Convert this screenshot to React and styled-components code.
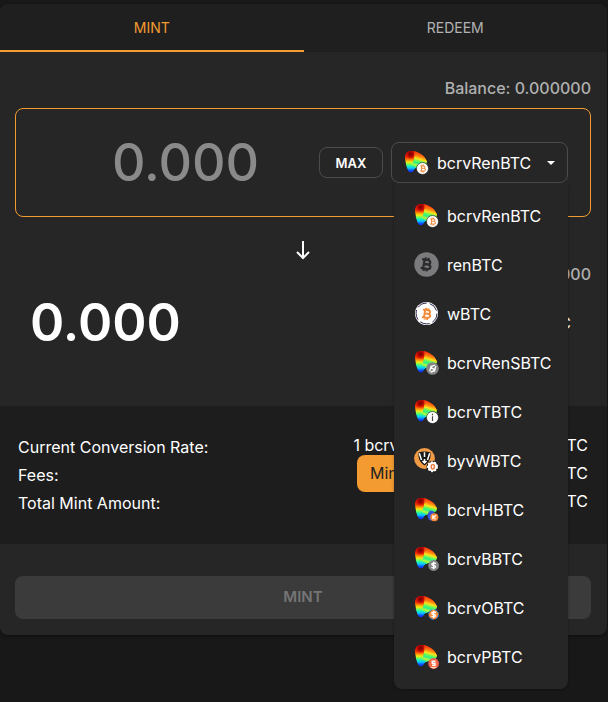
import React, { useId, useState } from "react";
import styled, { createGlobalStyle } from "styled-components";

const GlobalStyle = createGlobalStyle`
  * {
    box-sizing: border-box;
  }
  body {
    margin: 0;
    background: #181818;
    color: #fff;
    font-family: Inter, "Liberation Sans", sans-serif;
    font-size: 16px;
    line-height: 24px;
  }
  button, input, select {
    font: inherit;
    color: inherit;
  }
`;

const Page = styled.main`
  min-height: 100vh;
  padding: 4px 1px 16px 0;
`;

const Card = styled.section`
  background: #262626;
  border-radius: 8px;
  box-shadow: 0 1px 3px rgba(0, 0, 0, 0.4);
`;

const Tabs = styled.div`
  display: grid;
  grid-template-columns: 1fr 1fr;
  background: #1f1f1f;
  border-radius: 8px 8px 0 0;
`;

const Tab = styled.button`
  height: 48px;
  padding: 2px 0 0;
  border: 0;
  border-bottom: 2px solid ${(p) => (p.$active ? "#f39b31" : "transparent")};
  background: none;
  color: ${(p) => (p.$active ? "#f39b31" : "#b3b3b3")};
  font-size: 14px;
  cursor: pointer;
`;

const Exchange = styled.div`
  padding: 24px 16px 54px 15px;
`;

const Balance = styled.div`
  color: #b0b0b0;
  font-weight: 500;
  text-align: right;
`;

const InputBox = styled.div`
  display: flex;
  align-items: center;
  gap: 8px;
  margin-top: 8px;
  padding: 33px 22px 33px 44px;
  border: 1px solid #f39b31;
  border-radius: 8px;
`;

const AmountInput = styled.input`
  flex: 1;
  min-width: 0;
  height: 41px;
  padding: 0;
  border: 0;
  outline: 0;
  background: none;
  font-size: 52px;
  font-weight: 500;
  text-align: center;

  &::placeholder {
    color: #8a8a8a;
    opacity: 1;
  }
`;

const MaxButton = styled.button`
  width: 64px;
  height: 31px;
  padding: 0;
  border: 1px solid #4c4c4c;
  border-radius: 8px;
  background: none;
  font-size: 13px;
  font-weight: 600;
  cursor: pointer;
`;

const TokenSelect = styled.div`
  position: relative;
  width: 177px;
`;

const TokenField = styled.div`
  display: flex;
  align-items: center;
  gap: 8px;
  height: 41px;
  padding: 0 10px 0 12px;
  border: 1px solid #4c4c4c;
  border-radius: 8px;
`;

const NativeSelect = styled.select`
  flex: 1;
  min-width: 0;
  height: 39px;
  padding: 0;
  border: 0;
  outline: 0;
  appearance: none;
  background: none;
  cursor: pointer;
`;

const Menu = styled.ul`
  position: absolute;
  z-index: 2;
  top: 100%;
  right: 0;
  left: 3px;
  margin: 0;
  padding: 8px 0;
  border-radius: 0 0 8px 8px;
  background: #262626;
  box-shadow: 0 1px 3px rgba(0, 0, 0, 0.3);
  list-style: none;
`;

const MenuItem = styled.button`
  display: flex;
  align-items: center;
  gap: 8px;
  width: 100%;
  height: 49px;
  padding: 0 0 0 20px;
  border: 0;
  background: none;
  text-align: left;
  cursor: pointer;
`;

const Direction = styled.div`
  display: flex;
  justify-content: center;
  padding-top: 21px;
`;

const OutputRow = styled.div`
  display: flex;
  align-items: center;
  justify-content: space-between;
  height: 58px;
  margin-top: 8px;
  padding: 0 20px 0 15px;
`;

const OutputAmount = styled.output`
  font-size: 52px;
  font-weight: 600;
`;

const Details = styled.dl`
  margin: 0;
  padding: 27px 19px 27px 18px;
  background: #1d1d1d;
`;

const DetailRow = styled.div`
  position: relative;
  display: flex;
  justify-content: space-between;
  height: 28px;

  dt {
    line-height: 28px;
  }
  dd {
    margin: 0;
    line-height: 24px;
  }
`;

const Tooltip = styled.span`
  position: absolute;
  z-index: 1;
  top: -6px;
  right: 70px;
  width: 161px;
  padding: 6px 13px 7px;
  border-radius: 8px;
  background: #f39b31;
  color: #222;
`;

const Actions = styled.div`
  padding: 32px 16px 16px 15px;
`;

const SubmitButton = styled.button`
  width: 100%;
  height: 43px;
  padding: 0 0 2px;
  border: 0;
  border-radius: 8px;
  background: #3b3b3b;
  color: #757575;
  font-size: 15px;
  font-weight: 600;
`;

const tokens = [
  { symbol: "bcrvRenBTC", icon: "curve", badge: "ren" },
  { symbol: "renBTC", icon: "ren" },
  { symbol: "wBTC", icon: "wbtc" },
  { symbol: "bcrvRenSBTC", icon: "curve", badge: "sbtc" },
  { symbol: "bcrvTBTC", icon: "curve", badge: "tbtc" },
  { symbol: "byvWBTC", icon: "yearn" },
  { symbol: "bcrvHBTC", icon: "curve", badge: "hbtc" },
  { symbol: "bcrvBBTC", icon: "curve", badge: "bbtc" },
  { symbol: "bcrvOBTC", icon: "curve", badge: "obtc" },
  { symbol: "bcrvPBTC", icon: "curve", badge: "pbtc" },
];

// bitcoin mark drawn on a 12x14 grid
const BitcoinMark = ({ color, transform, width = 2 }) => (
  <g transform={transform} fill="none" stroke={color} strokeWidth={width}>
    <path d="M1 2.5H7.2C10.6 2.5 10.6 6.7 7.2 6.7H3.5M7.2 6.7C11.8 6.7 11.8 11.5 7.2 11.5H1M3.6 2.5V11.5M4.5 0V2.5M7.5 0V2.5M4.5 11.5V14M7.5 11.5V14" />
  </g>
);

const DollarMark = ({ color = "#fff" }) => (
  <path
    d="M21.8 17.8C20.8 16.6 17.8 16.8 17.8 18.3C17.8 20 21.6 19 21.6 20.7C21.6 22.3 18.6 22.3 17.5 21.1M19.6 15.8V23.2"
    fill="none"
    stroke={color}
    strokeWidth="1.3"
  />
);

const badges = {
  ren: (
    <>
      <circle cx="18.5" cy="18.5" r="6" fill="#fff" stroke="#111" strokeWidth="0.6" />
      <BitcoinMark color="#f28a3a" width={1.8} transform="translate(15.5 14.6) scale(0.56)" />
    </>
  ),
  sbtc: (
    <>
      <circle cx="18.5" cy="18.5" r="6.3" fill="#858585" />
      <path d="M20.8 15.2L18 16.2L17.2 18.2L20 19.2L19 21.4L16.6 22M17.3 15.8L15.7 21.2M21.8 16L20.4 21.6" fill="none" stroke="#fff" strokeWidth="1.3" />
    </>
  ),
  tbtc: (
    <>
      <circle cx="18.5" cy="18.5" r="6" fill="#fff" stroke="#111" strokeWidth="0.6" />
      <path d="M18.5 14.8V16.2M18.5 17.2V22" stroke="#444" strokeWidth="1.2" />
    </>
  ),
  hbtc: (
    <>
      <path d="M16.5 13.5C12.5 16 12.5 21.5 16.5 23.8L20 22.5V14.5Z" fill="#3654d8" />
      <circle cx="20.3" cy="20.3" r="4" fill="#f58a3b" />
      <path d="M18.8 18.2V22.2M22.2 18.3L19.4 20.2L21.5 22.2" fill="none" stroke="#fff" strokeWidth="1.2" />
    </>
  ),
  bbtc: (
    <>
      <circle cx="19.6" cy="19.5" r="5.4" fill="#858585" />
      <DollarMark />
    </>
  ),
  obtc: (
    <>
      <circle cx="19.6" cy="19.5" r="5" fill="#f58a3b" stroke="#1876cf" strokeWidth="1" strokeDasharray="5 3" />
      <DollarMark />
    </>
  ),
  pbtc: (
    <>
      <circle cx="19.6" cy="19.5" r="5.4" fill="#ef5b50" />
      <path d="M16 22.8A5.4 5.4 0 0 0 23.2 22.8Z" fill="#fff1c9" />
      <circle cx="19.6" cy="19.2" r="4" fill="#f06d43" />
      <path d="M21.5 17.2H18.3V19.3H21V21.3H18" fill="none" stroke="#fff" strokeWidth="1.4" />
    </>
  ),
};

const CurveLogo = () => {
  const id = useId();
  const shape =
    "M1 7C1 3 3.5 1 7 1C13 0.5 20.5 5 22.8 11C23.2 14 21 15.5 17 16.5C13.5 17.5 11.5 17.5 10 20C9 22.5 7 23.3 5 22C2.5 19 1 12 1 7Z";
  return (
    <>
      <defs>
        <linearGradient id={`${id}g`} x1="0" y1="1" x2="0" y2="23" gradientUnits="userSpaceOnUse">
          <stop offset="0" stopColor="#d40c05" />
          <stop offset="0.28" stopColor="#f02a05" />
          <stop offset="0.4" stopColor="#ff8a05" />
          <stop offset="0.5" stopColor="#ffe60a" />
          <stop offset="0.59" stopColor="#7dff50" />
          <stop offset="0.68" stopColor="#1df5b0" />
          <stop offset="0.78" stopColor="#0bc3ff" />
          <stop offset="0.88" stopColor="#0b55ff" />
          <stop offset="1" stopColor="#1414cf" />
        </linearGradient>
        <radialGradient id={`${id}r`} cx="6.5" cy="4" r="5.5" gradientUnits="userSpaceOnUse">
          <stop offset="0" stopColor="#7d0000" />
          <stop offset="0.4" stopColor="#a00303" />
          <stop offset="1" stopColor="#e01005" stopOpacity="0" />
        </radialGradient>
        <linearGradient id={`${id}w`} x1="16" y1="3" x2="12" y2="17" gradientUnits="userSpaceOnUse">
          <stop offset="0" stopColor="#ff3a0c" />
          <stop offset="0.25" stopColor="#ff8a10" />
          <stop offset="0.42" stopColor="#ffe31a" />
          <stop offset="0.58" stopColor="#5dfb5a" />
          <stop offset="0.72" stopColor="#2cf08c" />
          <stop offset="0.88" stopColor="#b8fa35" />
          <stop offset="1" stopColor="#49f27a" />
        </linearGradient>
        <clipPath id={`${id}c`}>
          <path d={shape} />
        </clipPath>
      </defs>
      <g clipPath={`url(#${id}c)`}>
        <path d={shape} fill={`url(#${id}g)`} />
        <path d="M10 0L25 3V18L12 18L8 15L10 9Z" fill={`url(#${id}w)`} />
        <circle cx="6.5" cy="4.5" r="6" fill={`url(#${id}r)`} />
      </g>
    </>
  );
};

const glyphs = {
  curve: <CurveLogo />,
  ren: (
    <>
      <circle cx="12.5" cy="12.5" r="12.2" fill="#7b7b7e" />
      <BitcoinMark color="#2b2b2d" width={2.3} transform="translate(7.6 4.6) rotate(10) scale(0.98)" />
    </>
  ),
  wbtc: (
    <>
      <circle cx="12.5" cy="12.5" r="11.5" fill="#fff" />
      <circle cx="12.5" cy="12.5" r="10.4" fill="none" stroke="#30264d" strokeWidth="1" strokeDasharray="10 3" />
      <BitcoinMark color="#f28a3a" width={2.3} transform="translate(8.4 6.4) rotate(8) scale(0.84)" />
    </>
  ),
  yearn: (
    <>
      <circle cx="10.5" cy="10.5" r="10.4" fill="#f29b45" />
      <path d="M4.5 4.5C8 3 13 3 16.5 4.5C17 11 15 14.5 10.5 17.5C6 14.5 4 11 4.5 4.5Z" fill="#181818" />
      <path d="M5.3 5.2L7.5 12M15.7 5.2L13.5 12M10.5 4.2V9M10.5 11V15M8.5 13L10.5 15L12.5 13" fill="none" stroke="#fff" strokeWidth="1.5" />
      <circle cx="18.5" cy="18.7" r="6" fill="#161616" />
      <circle cx="18.5" cy="18.7" r="4.8" fill="#fff" stroke="#fff" strokeWidth="1.3" strokeDasharray="2 1.4" />
      <ellipse cx="18.8" cy="18.7" rx="1.6" ry="2.2" fill="#fff" stroke="#ee8148" strokeWidth="1.5" />
    </>
  ),
};

const TokenIcon = ({ token }) => (
  <svg width="25" height="25" viewBox="0 0 25 25" aria-hidden="true">
    {glyphs[token.icon]}
    {badges[token.badge]}
  </svg>
);

const App = () => {
  const [tab, setTab] = useState("mint");
  const [amount, setAmount] = useState("");
  const [open, setOpen] = useState(true);
  const [symbol, setSymbol] = useState("bcrvRenBTC");

  const selected = tokens.find((token) => token.symbol === symbol);

  const handleSelect = (value) => {
    setSymbol(value);
    setOpen(false);
  };

  return (
    <Page>
      <GlobalStyle />
      <Card>
        <Tabs role="tablist">
          <Tab role="tab" aria-selected={tab === "mint"} $active={tab === "mint"} onClick={() => setTab("mint")}>
            MINT
          </Tab>
          <Tab role="tab" aria-selected={tab === "redeem"} $active={tab === "redeem"} onClick={() => setTab("redeem")}>
            REDEEM
          </Tab>
        </Tabs>

        <Exchange>
          <Balance>Balance: 0.000000</Balance>
          <InputBox>
            <AmountInput
              type="text"
              aria-label="Amount"
              placeholder="0.000"
              value={amount}
              onChange={(e) => setAmount(e.target.value)}
            />
            <MaxButton type="button">MAX</MaxButton>
            <TokenSelect>
              <TokenField>
                <TokenIcon token={selected} />
                <NativeSelect
                  aria-label="Token"
                  value={symbol}
                  onMouseDown={(e) => {
                    e.preventDefault();
                    setOpen(!open);
                  }}
                  onChange={(e) => handleSelect(e.target.value)}
                >
                  {tokens.map((token) => (
                    <option key={token.symbol}>{token.symbol}</option>
                  ))}
                </NativeSelect>
                <svg width="12" height="6" viewBox="0 0 12 6" aria-hidden="true">
                  <path d="M2 1H10L6 5Z" fill="#fff" />
                </svg>
              </TokenField>
              {open && (
                <Menu>
                  {tokens.map((token) => (
                    <li key={token.symbol}>
                      <MenuItem type="button" onClick={() => handleSelect(token.symbol)}>
                        <TokenIcon token={token} />
                        {token.symbol}
                      </MenuItem>
                    </li>
                  ))}
                </Menu>
              )}
            </TokenSelect>
          </InputBox>

          <Direction>
            <svg width="24" height="24" viewBox="0 0 24 24" fill="none" stroke="#fff" strokeWidth="2" aria-hidden="true">
              <path d="M12 3V20M6 14L12 20L18 14" />
            </svg>
          </Direction>

          <Balance>Balance: 0.000000</Balance>
          <OutputRow>
            <OutputAmount>0.000</OutputAmount>
            <span>ibBTC</span>
          </OutputRow>
        </Exchange>

        <Details>
          <DetailRow>
            <dt>Current Conversion Rate:</dt>
            <dd>1 bcrvRenBTC = 0.98810 ibBTC</dd>
          </DetailRow>
          <DetailRow>
            <dt>Fees:</dt>
            <dd>
              0.0000 ibBTC
              <Tooltip role="tooltip">Mint Fee: 0.250%</Tooltip>
            </dd>
          </DetailRow>
          <DetailRow>
            <dt>Total Mint Amount:</dt>
            <dd>0.0000 ibBTC</dd>
          </DetailRow>
        </Details>

        <Actions>
          <SubmitButton type="button" disabled>
            MINT
          </SubmitButton>
        </Actions>
      </Card>
    </Page>
  );
};

export default App;
